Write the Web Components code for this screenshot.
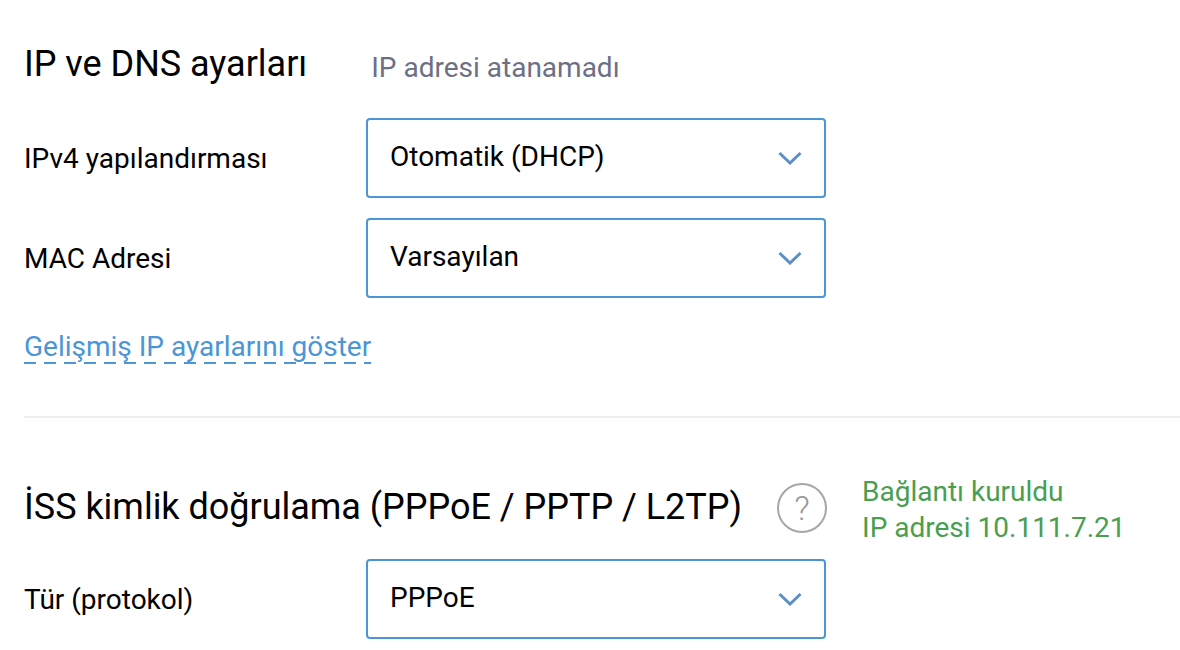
<!DOCTYPE html>
<html lang="tr">
<head>
<meta charset="utf-8">
<title>IP ve DNS ayarları</title>
<style>
    html, body { margin: 0; background: #fff; }
    body { font-family: Roboto, "Liberation Sans", sans-serif; color: #000; overflow: hidden; }
    main { display: block; padding: 39px 0 0 24px; }
</style>
</head>
<body>
<main>
    <section-head title="IP ve DNS ayarları" gap="64" height="50">
        <span slot="status" style="color:#6d6f85;position:relative;top:3px">IP adresi atanamadı</span>
    </section-head>
    <form-row label="IPv4 yapılandırması" style="margin-top:29px">
        <select-box value="Otomatik (DHCP)"></select-box>
    </form-row>
    <form-row label="MAC Adresi" style="margin-top:20px">
        <select-box value="Varsayılan"></select-box>
    </form-row>
    <dashed-link text="Gelişmiş IP ayarlarını göster"></dashed-link>
    <h-divider></h-divider>
    <section-head title="İSS kimlik doğrulama (PPPoE / PPTP / L2TP)" gap="35" lift="2" height="66" style="margin-top:57px">
        <help-icon slot="after"></help-icon>
        <status-text slot="status"></status-text>
    </section-head>
    <form-row label="Tür (protokol)" style="margin-top:18px">
        <select-box value="PPPoE"></select-box>
    </form-row>
</main>

<script>
/* Heading row: title, optional icon, status text */
class SectionHead extends HTMLElement {
    constructor() {
        super();
        this.attachShadow({ mode: 'open' });
    }
    connectedCallback() {
        const gap = this.getAttribute('gap') || 40;
        const height = this.getAttribute('height') || 50;
        const lift = this.getAttribute('lift') || 0;
        this.shadowRoot.innerHTML = `
            <style>
                :host { display: flex; align-items: center; gap: ${gap}px; height: ${height}px; font-size: 28px; }
                h2 { margin: 0 0 ${lift}px; font-size: 36px; font-weight: 400; color: #000; white-space: nowrap; letter-spacing: -0.02px; }
            </style>
            <h2>${this.getAttribute('title')}</h2>
            <slot name="after"></slot>
            <slot name="status"></slot>
        `;
    }
}
customElements.define('section-head', SectionHead);

class FormRow extends HTMLElement {
    constructor() {
        super();
        this.attachShadow({ mode: 'open' });
    }
    connectedCallback() {
        this.shadowRoot.innerHTML = `
            <style>
                :host { display: grid; grid-template-columns: 342px 460px; align-items: center; }
                label { font-size: 28px; color: #000; }
            </style>
            <label>${this.getAttribute('label')}</label>
            <slot></slot>
        `;
    }
}
customElements.define('form-row', FormRow);

class SelectBox extends HTMLElement {
    constructor() {
        super();
        this.attachShadow({ mode: 'open' });
    }
    connectedCallback() {
        this.shadowRoot.innerHTML = `
            <style>
                :host {
                    display: flex;
                    align-items: center;
                    justify-content: space-between;
                    box-sizing: border-box;
                    width: 460px;
                    height: 80px;
                    padding: 0 22px;
                    border: 2px solid #4a96d6;
                    border-radius: 4px;
                    background: #fff;
                }
                span { font-size: 28px; color: #000; position: relative; top: -2px; }
                svg { display: block; width: 24px; height: 14px; }
            </style>
            <span>${this.getAttribute('value')}</span>
            <svg viewBox="0 0 24 14" fill="none" stroke="#5b8fc7" stroke-width="3">
                <path d="M1.5 2 L12 12 L22.5 2"/>
            </svg>
        `;
    }
}
customElements.define('select-box', SelectBox);

class DashedLink extends HTMLElement {
    constructor() {
        super();
        this.attachShadow({ mode: 'open' });
    }
    connectedCallback() {
        this.shadowRoot.innerHTML = `
            <style>
                :host { display: flex; margin-top: 30px; }
                a {
                    font-size: 28px;
                    line-height: 34px;
                    padding-top: 2px;
                    color: #4a96d6;
                    text-decoration: none;
                    background-image: linear-gradient(to right, #4a96d6 12px, transparent 12px);
                    background-size: 20px 2px;
                    background-repeat: repeat-x;
                    background-position: 0 100%;
                }
            </style>
            <a href="#">${this.getAttribute('text')}</a>
        `;
    }
}
customElements.define('dashed-link', DashedLink);

class HDivider extends HTMLElement {
    constructor() {
        super();
        this.attachShadow({ mode: 'open' });
    }
    connectedCallback() {
        this.shadowRoot.innerHTML = `
            <style>
                :host { display: block; height: 2px; margin-top: 52px; background: #eeeeee; }
            </style>
        `;
    }
}
customElements.define('h-divider', HDivider);

class HelpIcon extends HTMLElement {
    constructor() {
        super();
        this.attachShadow({ mode: 'open' });
    }
    connectedCallback() {
        this.shadowRoot.innerHTML = `
            <style>
                :host {
                    display: flex;
                    align-items: center;
                    justify-content: center;
                    flex: none;
                    box-sizing: border-box;
                    width: 50px;
                    height: 50px;
                    border: 2px solid #a6a6a6;
                    border-radius: 50%;
                    color: #999;
                    font-size: 34px;
                    font-weight: 300;
                    line-height: 1;
                }
            </style>
            ?
        `;
    }
}
customElements.define('help-icon', HelpIcon);

class StatusText extends HTMLElement {
    constructor() {
        super();
        this.attachShadow({ mode: 'open' });
    }
    connectedCallback() {
        this.shadowRoot.innerHTML = `
            <style>
                :host { display: block; padding-top: 4px; color: #4a9e50; font-size: 28px; line-height: 36px; }
            </style>
            <div>Bağlantı kuruldu</div>
            <div>IP adresi 10.111.7.21</div>
        `;
    }
}
customElements.define('status-text', StatusText);
</script>
</body>
</html>
